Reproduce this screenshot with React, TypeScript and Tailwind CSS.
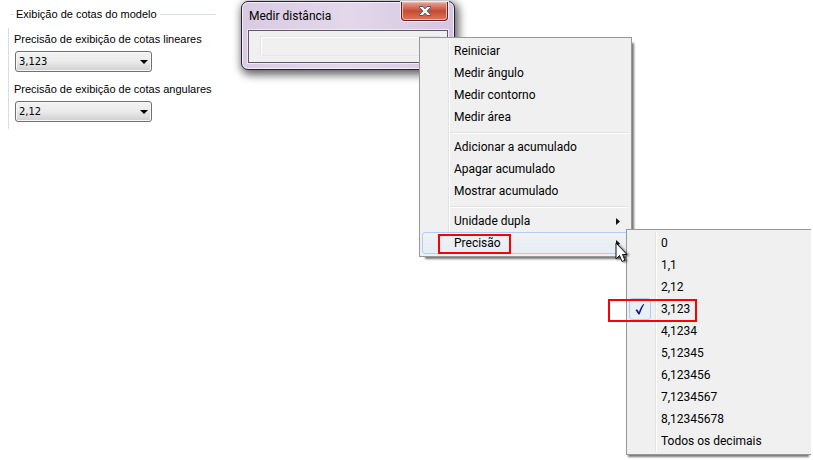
import type { ReactNode } from "react";

const uiFont = "font-['Roboto','Open_Sans',sans-serif]";
const formFont = "font-['Liberation_Sans',sans-serif]";

const precisions = ["0", "1,1", "2,12", "3,123", "4,1234", "5,12345", "6,123456", "7,1234567", "8,12345678", "Todos os decimais"];

function PrecisionSelect({ id, label, value }: { id: string; label: string; value: string }) {
  return (
    <div className="flex flex-col items-start">
      <label htmlFor={id} className="h-[18px] text-[11px] leading-3 whitespace-nowrap">{label}</label>
      <div className="relative ml-px w-[137px]">
        <select
          id={id}
          defaultValue={value}
          className="block h-[21px] w-full appearance-none rounded-[3px] border border-[#707070] bg-linear-to-b from-[#f2f2f2] from-0% via-[#ebebeb] via-50% to-[#cfcfcf] px-[3px] font-['DejaVu_Sans_Condensed','DejaVu_Sans',sans-serif] text-[11px] leading-[19px] shadow-[inset_0_0_0_1px_#f8f8f8]"
        >
          {precisions.slice(0, 9).map((p) => <option key={p}>{p}</option>)}
        </select>
        <svg className="pointer-events-none absolute top-[9px] right-1 h-1 w-2" viewBox="0 0 8 4">
          <path d="M0 0H8L4 4Z" fill="#000" />
        </svg>
      </div>
    </div>
  );
}

function MenuPanel({ className, children }: { className: string; children: ReactNode }) {
  return (
    <div role="menu" className={`absolute border border-[#979797] bg-[#f0f0f0] p-[2px] ${className}`}>
      <div className="pointer-events-none absolute inset-y-[2px] left-7 w-[2px] border-l border-[#e2e3e3] bg-white" />
      {children}
    </div>
  );
}

function MenuItem({ label, arrow, active, checked, marked }: { label: string; arrow?: boolean; active?: boolean; checked?: boolean; marked?: string }) {
  return (
    <button
      type="button"
      role="menuitem"
      className={`relative flex h-[22px] w-full items-center rounded-[3px] border pr-2 pl-[31px] text-left text-[12px] leading-4 whitespace-nowrap ${
        active ? "border-[#aecff7] bg-linear-to-b from-[#f0f2f5]/80 to-[#e4ecf5]/80" : "border-transparent"
      }`}
    >
      {checked && (
        <span className="absolute -top-px -left-px flex size-[22px] items-center justify-center rounded-[3px] border border-[#aecff7] bg-[#e9eff7]">
          <svg className="h-[11px] w-[10px]" viewBox="0 0 10 11">
            <path d="M.5 6 2 5.200 4 8C5 4.500 6.500 2 8.500 0L9.200.4C7.500 3 6 6.500 4.600 10.500H3.500Z" fill="#0c12a1" />
          </svg>
        </span>
      )}
      <span className="flex-1">{label}</span>
      {arrow && (
        <svg className="h-[7px] w-1" viewBox="0 0 4 7"><path d="M0 0 4 3.500 0 7Z" fill="#111" /></svg>
      )}
      {marked && <span className={`pointer-events-none absolute z-20 border-2 border-[#fa0000] ${marked}`} />}
    </button>
  );
}

function Separator() {
  return <div role="separator" className="mt-1 mr-[2px] mb-[2px] ml-7 h-[2px] border-t border-[#e0e0e0] bg-white" />;
}

function ContextMenu() {
  return (
    <MenuPanel className="top-[35px] left-[177px] z-10 w-[213px] shadow-[4px_4px_2px_-2px_#777]">
      <MenuItem label="Reiniciar" />
      <MenuItem label="Medir ângulo" />
      <MenuItem label="Medir contorno" />
      <MenuItem label="Medir área" />
      <Separator />
      <MenuItem label="Adicionar a acumulado" />
      <MenuItem label="Apagar acumulado" />
      <MenuItem label="Mostrar acumulado" />
      <Separator />
      <MenuItem label="Unidade dupla" arrow />
      <MenuItem label="Precisão" arrow active marked="top-px left-[15px] h-5 w-[73px]" />
      <MenuPanel className="top-[191px] left-[206px] w-[185px] border-r-0 shadow-[0_4px_2px_-2px_#777]">
        {precisions.map((p) => (
          <MenuItem key={p} label={p} checked={p === "3,123"} marked={p === "3,123" ? "top-0 -left-[22px] h-[23px] w-[89px]" : undefined} />
        ))}
      </MenuPanel>
      <svg className="pointer-events-none absolute top-[204px] left-[195px] z-30 h-[22px] w-[15px] drop-shadow-[2px_1px_1px_#0008]" viewBox="0 0 15 22">
        <path d="M1 1V17L4.500 13.500 7 19.500 10 18.300 7.500 12.500H12Z" fill="#fff" stroke="#111" />
      </svg>
    </MenuPanel>
  );
}

function MeasureDialog() {
  return (
    <section className={`relative mt-px h-[69px] w-[214px] shrink-0 rounded-[7px] border border-[#28222e] bg-[#dbcde5] bg-linear-to-r from-[#d9cae3] via-[#e2d8ea] to-[#d5c5e1] px-[6px] shadow-[2px_3px_9px_2px_#0009,inset_0_0_0_1px_#f4effa] ${uiFont}`}>
      <header className="flex h-7 items-start justify-between">
        <h1 className="pt-[6px] pl-px text-[12px] leading-4">Medir distância</h1>
        <button
          type="button"
          aria-label="Fechar"
          className="flex h-[19px] w-[47px] items-center justify-center rounded-b-[4px] border border-t-0 border-[#5a2626] bg-linear-to-b from-[#e5a596] from-0% via-[#c44a32] via-50% to-[#df765a] shadow-[inset_0_0_0_1px_#efb8a8,0_0_0_1px_#f0e8f4]"
        >
          <svg className="h-[10px] w-3" viewBox="0 0 12 10">
            <path d="M.5.500H4L6 2.800 8 .500H11.500V1.500L8.200 5 11.500 8.500V9.500H8L6 7.200 4 9.500H.5V8.500L3.800 5 .5 1.500Z" fill="#f5f5f5" stroke="#59545e" />
          </svg>
        </button>
      </header>
      <div className="flex h-[33px] border border-[#62566c] bg-[#f0f0f0] py-[6px] pr-[6px] pl-[12px] shadow-[0_0_0_1px_#f0e8f6]">
        <input aria-label="Distância" readOnly className="h-[19px] w-full min-w-0 border border-[#e2e7ef] border-t-white border-l-white bg-[#f0f0f0] shadow-[-1px_-1px_0_#e2e3e8]" />
      </div>
      <ContextMenu />
    </section>
  );
}

export default function App() {
  return (
    <main className="flex min-h-screen items-start overflow-hidden bg-white text-black">
      <fieldset className={`relative mt-2 mr-[25px] ml-2 w-[208px] min-w-0 shrink-0 pb-[7px] ${formFont}`}>
        <legend className="flex w-full items-center pl-[2px] text-[11px] leading-3 whitespace-nowrap">
          <span className="h-px w-[3px] rounded-l bg-[#d5dfe5]" />
          <span className="px-[3px]">Exibição de cotas do modelo</span>
          <span className="h-px flex-1 bg-[#d5dfe5]" />
        </legend>
        <div className="flex flex-col gap-[11px] pt-[13px] pl-[6px]">
          <PrecisionSelect id="linear" label="Precisão de exibição de cotas lineares" value="3,123" />
          <PrecisionSelect id="angular" label="Precisão de exibição de cotas angulares" value="2,12" />
        </div>
        <div className="absolute top-2 bottom-0 left-0 w-px bg-[#d5dfe5]" />
      </fieldset>
      <MeasureDialog />
    </main>
  );
}
